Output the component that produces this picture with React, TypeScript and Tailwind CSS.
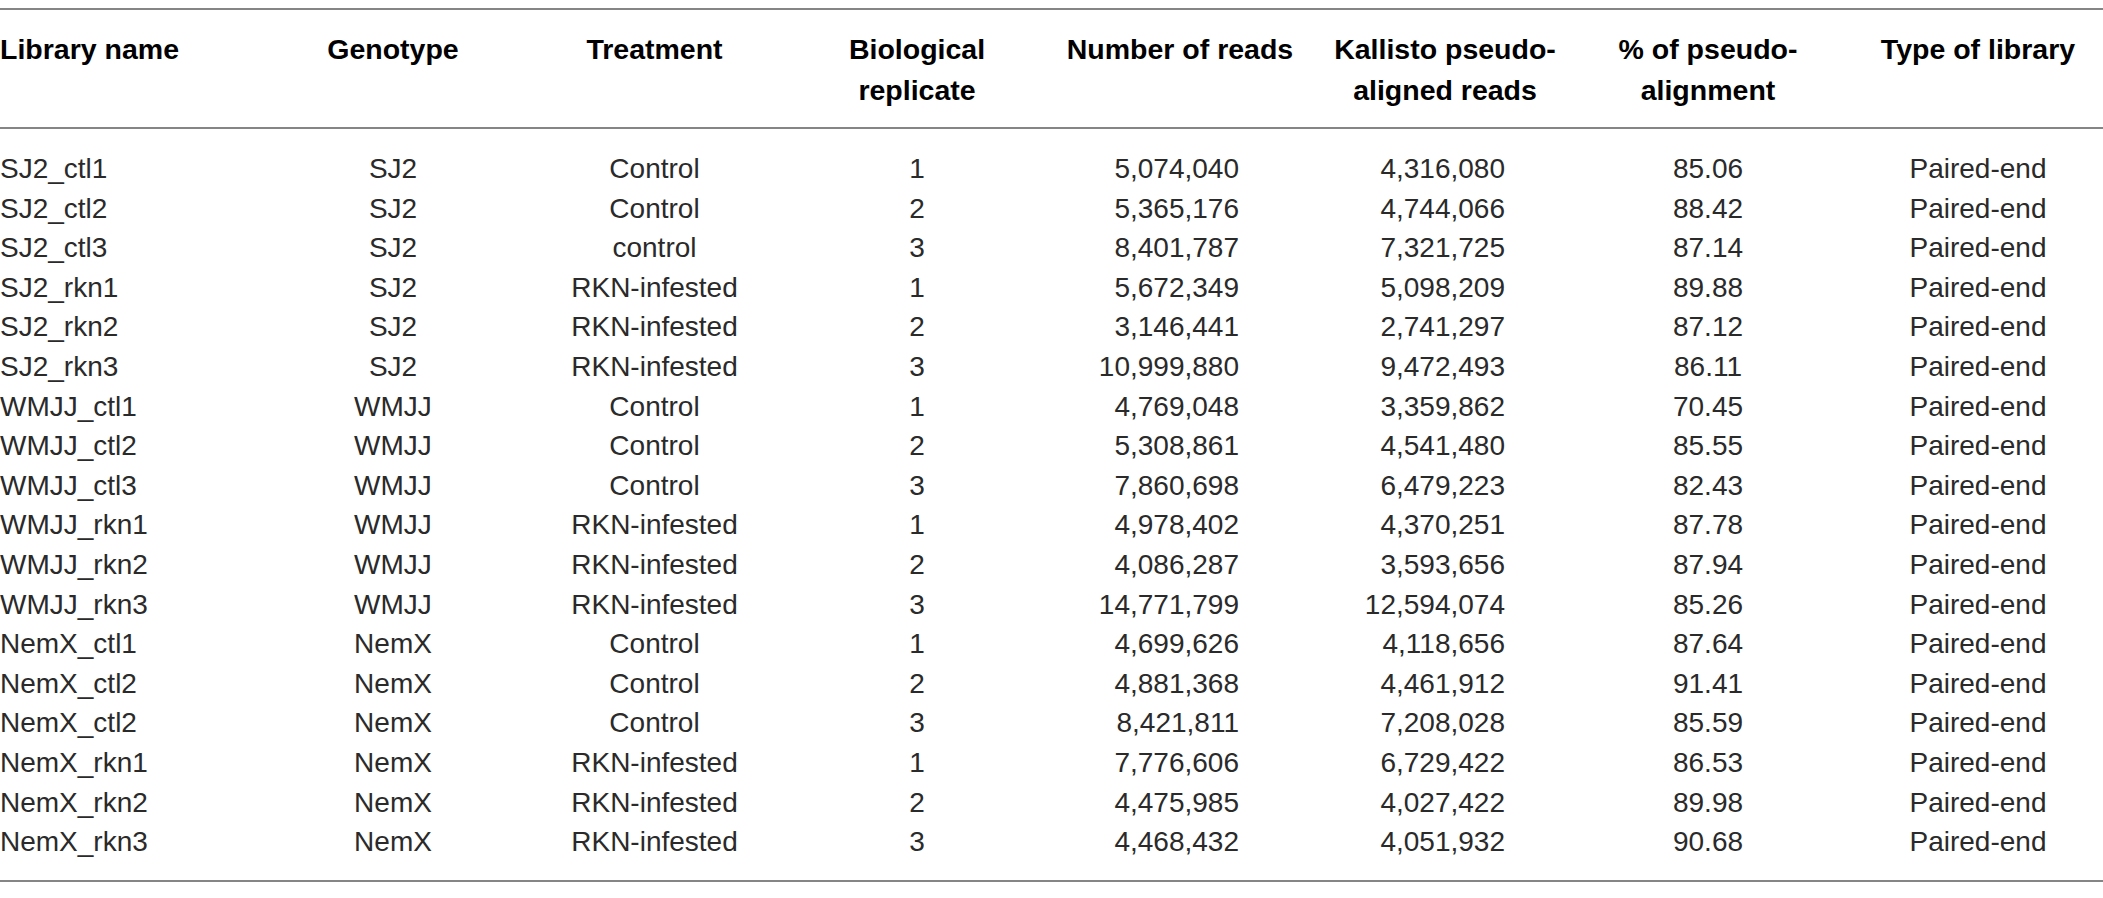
const cols =
  "grid grid-cols-[262px_262px_261px_264px_262px_268px_258px_266px]";

const headers = [
  { label: ["Library name"], align: "text-left" },
  { label: ["Genotype"], align: "text-center" },
  { label: ["Treatment"], align: "text-center" },
  { label: ["Biological", "replicate"], align: "text-center" },
  { label: ["Number of reads"], align: "text-center" },
  { label: ["Kallisto pseudo-", "aligned reads"], align: "text-center" },
  { label: ["% of pseudo-", "alignment"], align: "text-center" },
  { label: ["Type of library"], align: "text-center pl-4" },
];

const rows = [
  ["SJ2_ctl1", "SJ2", "Control", "1", "5,074,040", "4,316,080", "85.06"],
  ["SJ2_ctl2", "SJ2", "Control", "2", "5,365,176", "4,744,066", "88.42"],
  ["SJ2_ctl3", "SJ2", "control", "3", "8,401,787", "7,321,725", "87.14"],
  ["SJ2_rkn1", "SJ2", "RKN-infested", "1", "5,672,349", "5,098,209", "89.88"],
  ["SJ2_rkn2", "SJ2", "RKN-infested", "2", "3,146,441", "2,741,297", "87.12"],
  ["SJ2_rkn3", "SJ2", "RKN-infested", "3", "10,999,880", "9,472,493", "86.11"],
  ["WMJJ_ctl1", "WMJJ", "Control", "1", "4,769,048", "3,359,862", "70.45"],
  ["WMJJ_ctl2", "WMJJ", "Control", "2", "5,308,861", "4,541,480", "85.55"],
  ["WMJJ_ctl3", "WMJJ", "Control", "3", "7,860,698", "6,479,223", "82.43"],
  ["WMJJ_rkn1", "WMJJ", "RKN-infested", "1", "4,978,402", "4,370,251", "87.78"],
  ["WMJJ_rkn2", "WMJJ", "RKN-infested", "2", "4,086,287", "3,593,656", "87.94"],
  ["WMJJ_rkn3", "WMJJ", "RKN-infested", "3", "14,771,799", "12,594,074", "85.26"],
  ["NemX_ctl1", "NemX", "Control", "1", "4,699,626", "4,118,656", "87.64"],
  ["NemX_ctl2", "NemX", "Control", "2", "4,881,368", "4,461,912", "91.41"],
  ["NemX_ctl2", "NemX", "Control", "3", "8,421,811", "7,208,028", "85.59"],
  ["NemX_rkn1", "NemX", "RKN-infested", "1", "7,776,606", "6,729,422", "86.53"],
  ["NemX_rkn2", "NemX", "RKN-infested", "2", "4,475,985", "4,027,422", "89.98"],
  ["NemX_rkn3", "NemX", "RKN-infested", "3", "4,468,432", "4,051,932", "90.68"],
];

export default function App() {
  return (
    <div className="bg-white w-[2103px] h-[898px] pt-2 font-['Liberation_Sans',Arial,sans-serif]">
      <div className="border-y-2 border-[#858585]">
        {/* header */}
        <div className={`${cols} h-[119px] pt-[19px] border-b-2 border-[#858585] text-[28.5px] leading-[41px] font-bold text-black`}>
          {headers.map((h, i) => (
            <div key={i} className={`${h.align} whitespace-nowrap`}>
              {h.label.map((l) => (
                <div key={l}>{l}</div>
              ))}
            </div>
          ))}
        </div>

        {/* body */}
        <div className="pt-5 pb-[18px] text-[28px] leading-[39.6px] text-[#2a2a2a]">
          {rows.map((r, i) => (
            <div key={i} className={`${cols} whitespace-nowrap`}>
              <div>{r[0]}</div>
              <div className="text-center">{r[1]}</div>
              <div className="text-center">{r[2]}</div>
              <div className="text-center">{r[3]}</div>
              <div className="text-right pr-[72px]">{r[4]}</div>
              <div className="text-right pr-[74px]">{r[5]}</div>
              <div className="text-center">{r[6]}</div>
              <div className="text-center pl-4">Paired-end</div>
            </div>
          ))}
        </div>
      </div>
    </div>
  );
}
